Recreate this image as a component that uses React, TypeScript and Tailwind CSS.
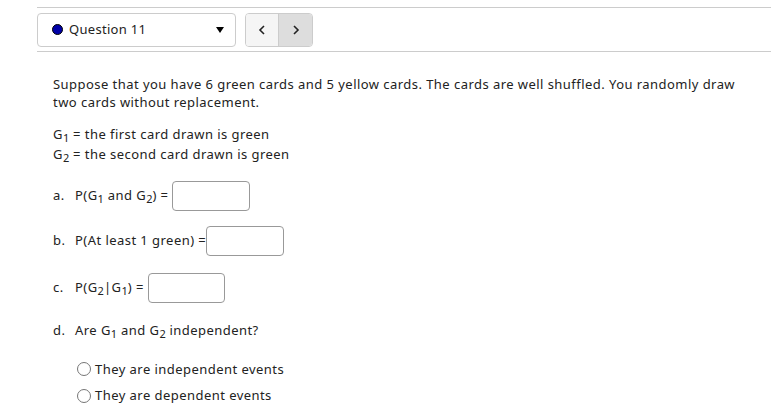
import React from "react";

const Sub = ({ children }: { children: React.ReactNode }) => (
  <span className="text-[11px] relative top-[3px] leading-none tracking-normal">{children}</span>
);

const Input = ({ w }: { w: string }) => (
  <span className={`inline-block h-[30px] border border-[#999] rounded-[4px] bg-white align-middle ${w}`} />
);

const Radio = ({ label }: { label: string }) => (
  <div className="flex items-center gap-[4px]">
    <span className="inline-block w-[14px] h-[14px] rounded-full border border-[#767676] bg-white" />
    <span>{label}</span>
  </div>
);

const Label = ({ k, children }: { k: string; children: React.ReactNode }) => (
  <span className="flex items-center">
    <span className="w-[22px]">{k}</span>
    <span>{children}</span>
  </span>
);

export default function App() {
  return (
    <div className="w-[771px] h-[420px] bg-white text-[#222] text-[13px] tracking-[0.45px] overflow-hidden" style={{ fontFamily: '"Noto Sans", sans-serif' }}>
      <div className="ml-[37px] mt-[7px] border-t border-b border-[#ccc] h-[45px] flex items-center gap-[9px]">
        <div className="w-[199px] h-[34px] border border-[#ccc] rounded-[4px] flex items-center pl-[14px] pr-[10px]">
          <span className="w-[11px] h-[11px] rounded-full bg-[#0000a8] border border-black" />
          <span className="ml-[6px] text-[#222] tracking-[0.3px]">Question 11</span>
          <span className="ml-auto mr-[1px] w-0 h-0 border-l-[4px] border-r-[4px] border-t-[6px] border-l-transparent border-r-transparent border-t-black" />
        </div>
        <div className="flex h-[34px] border border-[#ccc] rounded-[4px] overflow-hidden">
          <div className="w-[33px] bg-[#f5f5f5] flex items-center justify-center border-r border-[#ccc]">
            <svg width="8" height="10" viewBox="0 0 8 10"><path d="M6 1L2 5l4 4" fill="none" stroke="#222" strokeWidth="1.6" /></svg>
          </div>
          <div className="w-[33px] bg-[#ddd] flex items-center justify-center">
            <svg width="8" height="10" viewBox="0 0 8 10"><path d="M2 1l4 4-4 4" fill="none" stroke="#222" strokeWidth="1.6" /></svg>
          </div>
        </div>
      </div>

      <div className="pl-[53px] pr-[30px] pt-[23px]">
        <p className="leading-[18px] w-[690px]">
          Suppose that you have 6 green cards and 5 yellow cards. The cards are well shuffled. You randomly draw two cards without replacement.
        </p>
        <div className="mt-[13px] leading-[20px]">
          <div>G<Sub>1</Sub> = the first card drawn is green</div>
          <div>G<Sub>2</Sub> = the second card drawn is green</div>
        </div>
        <div className="mt-[17px] flex items-center h-[30px]">
          <Label k="a.">P(G<Sub>1</Sub> and G<Sub>2</Sub>) =&nbsp;</Label>
          <Input w="w-[78px]" />
        </div>
        <div className="mt-[15px] flex items-center h-[30px]">
          <Label k="b.">P(At least 1 green) =</Label>
          <Input w="w-[78px]" />
        </div>
        <div className="mt-[17px] flex items-center h-[30px]">
          <Label k="c.">P(G<Sub>2</Sub>|G<Sub>1</Sub>) =&nbsp;</Label>
          <Input w="w-[77px]" />
        </div>
        <div className="mt-[18px]">
          <Label k="d.">Are G<Sub>1</Sub> and G<Sub>2</Sub> independent?</Label>
        </div>
        <div className="pl-[24px] mt-[19px] flex flex-col gap-[7px]">
          <Radio label="They are independent events" />
          <Radio label="They are dependent events" />
        </div>
      </div>
    </div>
  );
}
